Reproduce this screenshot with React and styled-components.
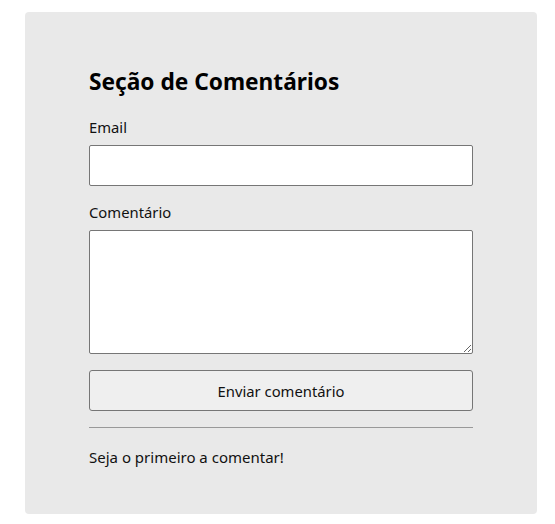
import React from "react";
import styled, { createGlobalStyle } from "styled-components";

const Global = createGlobalStyle`
  html, body { margin: 0; padding: 0; background: #ffffff; }
  body { font-family: "Noto Sans", "Open Sans", sans-serif; color: #111; }
`;

const Page = styled.div`
  padding: 12px 18px 10px 25px;
`;

const Card = styled.section`
  background: #e9e9e9;
  border-radius: 4px;
  padding: 55px 64px 47px 64px;
  display: flex;
  flex-direction: column;
`;

const Title = styled.h2`
  margin: 0 0 21px 0;
  font-size: 22.7px;
  line-height: 30px;
  font-weight: 700;
  color: #000;
`;

const Field = styled.div`
  display: flex;
  flex-direction: column;
  gap: ${(p) => p.$gap || 7}px;
  margin-bottom: ${(p) => p.$mb || 0}px;
`;

const Label = styled.label`
  font-size: 14.8px;
  line-height: 19px;
  color: #111;
`;

const Input = styled.input`
  box-sizing: border-box;
  height: 41px;
  width: 100%;
  border: 1px solid #767676;
  border-radius: 2px;
  background: #fff;
  padding: 0 8px;
  font: inherit;
`;

const TextArea = styled.textarea`
  box-sizing: border-box;
  height: 124px;
  width: 100%;
  border: 1px solid #767676;
  border-radius: 2px;
  background: #fff;
  padding: 6px 8px;
  font: inherit;
  resize: vertical;
  display: block;
`;

const Button = styled.button`
  box-sizing: border-box;
  height: 41px;
  width: 100%;
  border: 1px solid #767676;
  border-radius: 3px;
  background: #efefef;
  color: #111;
  font-family: inherit;
  font-size: 14.8px;
  cursor: pointer;
`;

const Rule = styled.hr`
  border: none;
  border-top: 1px solid #999;
  margin: 16px 0 19px 0;
  height: 0;
`;

const Empty = styled.p`
  margin: 0;
  font-size: 15px;
  line-height: 20px;
  color: #111;
`;

export default function App() {
  return (
    <>
      <Global />
      <Page>
        <Card>
          <Title>Seção de Comentários</Title>
          <Field $gap={8} $mb={17}>
            <Label htmlFor="email">Email</Label>
            <Input id="email" type="email" />
          </Field>
          <Field $gap={8} $mb={16}>
            <Label htmlFor="comentario">Comentário</Label>
            <TextArea id="comentario" />
          </Field>
          <Button type="button">Enviar comentário</Button>
          <Rule />
          <Empty>Seja o primeiro a comentar!</Empty>
        </Card>
      </Page>
    </>
  );
}
